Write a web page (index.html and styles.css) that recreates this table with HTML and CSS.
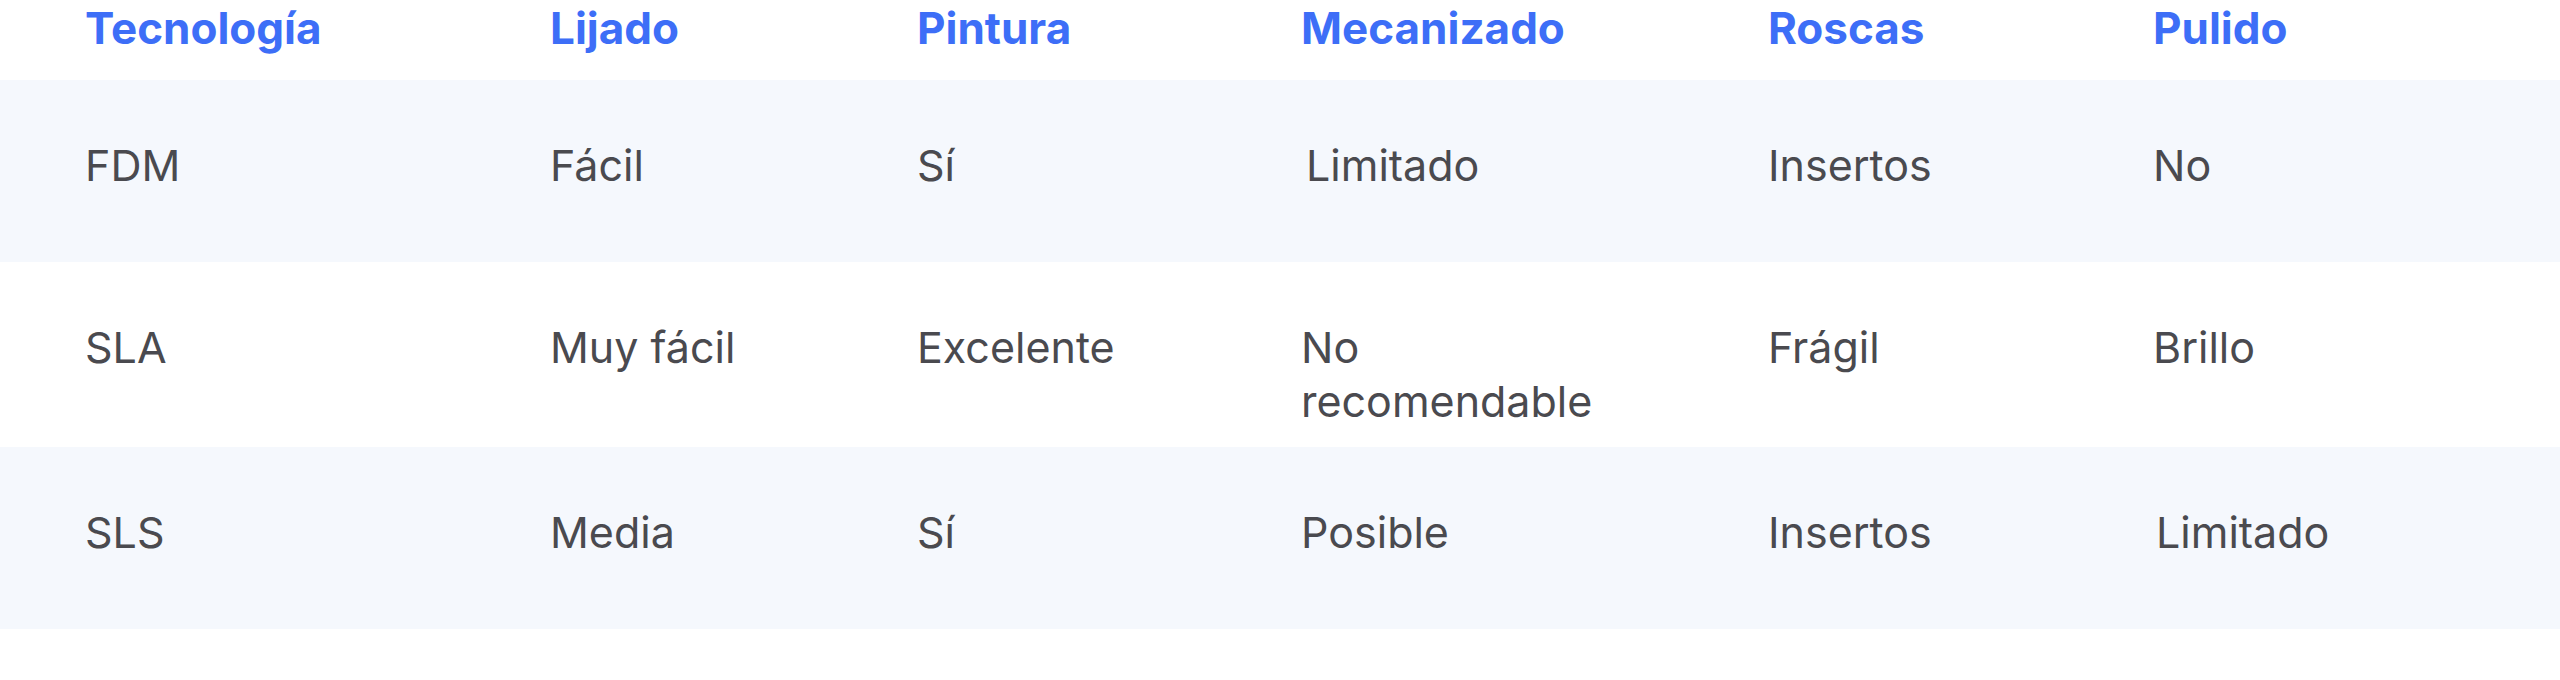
FILE: index.html
```html
<!DOCTYPE html>
<html lang="es">
<head>
<meta charset="utf-8">
<title>Postprocesado por tecnología</title>
<link rel="stylesheet" href="styles.css">
</head>
<body>
<div class="table">
  <div class="row head">
    <div class="cell">Tecnología</div>
    <div class="cell">Lijado</div>
    <div class="cell">Pintura</div>
    <div class="cell">Mecanizado</div>
    <div class="cell">Roscas</div>
    <div class="cell">Pulido</div>
  </div>
  <div class="row body shaded">
    <div class="cell">FDM</div>
    <div class="cell">Fácil</div>
    <div class="cell">Sí</div>
    <div class="cell nudge">Limitado</div>
    <div class="cell">Insertos</div>
    <div class="cell">No</div>
  </div>
  <div class="row body">
    <div class="cell">SLA</div>
    <div class="cell">Muy fácil</div>
    <div class="cell">Excelente</div>
    <div class="cell">No recomendable</div>
    <div class="cell">Frágil</div>
    <div class="cell">Brillo</div>
  </div>
  <div class="row body shaded">
    <div class="cell">SLS</div>
    <div class="cell">Media</div>
    <div class="cell">Sí</div>
    <div class="cell">Posible</div>
    <div class="cell">Insertos</div>
    <div class="cell nudge-sm">Limitado</div>
  </div>
</div>
</body>
</html>
```
FILE: styles.css
```css
html, body {
  margin: 0;
  padding: 0;
  background: #ffffff;
}

.table {
  width: 2560px;
}

.row {
  display: grid;
  grid-template-columns: 465px 367px 384px 467px 385px 1fr;
  padding-left: 85px;
  box-sizing: border-box;
}

.cell {
  padding-right: 140px;
}

.head {
  height: 80px;
  padding-top: 1px;
  font-family: Inter, Roboto, sans-serif;
  font-weight: 700;
  font-size: 44px;
  line-height: 54px;
  color: #3d6ef7;
}

.body {
  min-height: 182px;
  padding-top: 58px;
  padding-bottom: 19px;
  font-family: Inter, "Noto Sans", sans-serif;
  font-weight: 400;
  font-size: 43px;
  line-height: 54px;
  color: #4a4a4f;
}

.shaded {
  background: #f5f8fd;
}

.nudge {
  padding-left: 5px;
}

.nudge-sm {
  padding-left: 3px;
}
```
